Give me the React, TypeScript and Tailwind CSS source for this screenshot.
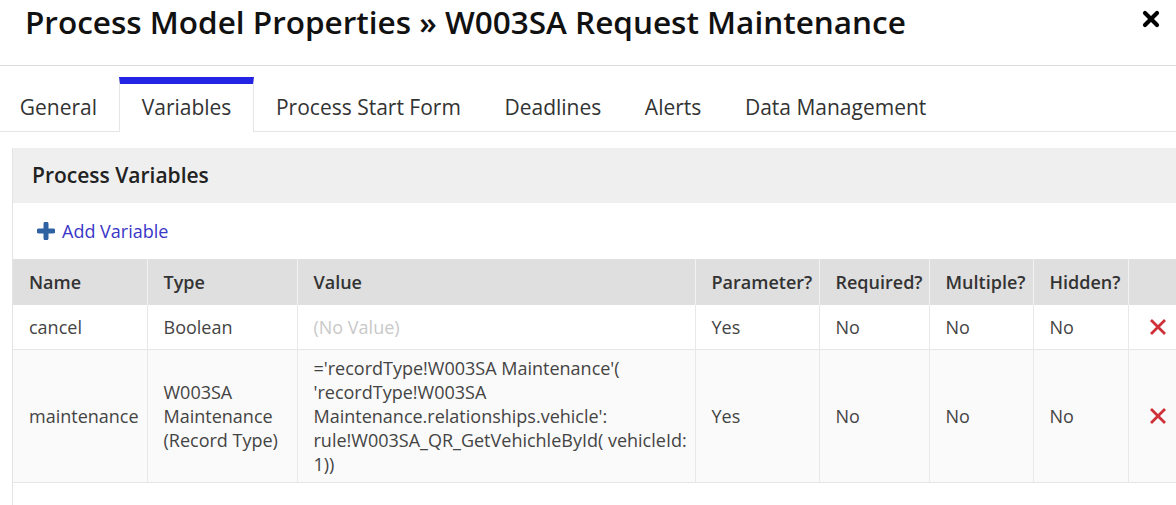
import React from "react";

const TABS = [
  "General",
  "Variables",
  "Process Start Form",
  "Deadlines",
  "Alerts",
  "Data Management",
];

type Variable = {
  name: string;
  type: React.ReactNode;
  value: React.ReactNode;
  parameter: string;
  required: string;
  multiple: string;
  hidden: string;
};

const VARIABLES: Variable[] = [
  {
    name: "cancel",
    type: "Boolean",
    value: <span className="text-[#c9c9c9]">(No Value)</span>,
    parameter: "Yes",
    required: "No",
    multiple: "No",
    hidden: "No",
  },
  {
    name: "maintenance",
    type: "W003SA Maintenance (Record Type)",
    value:
      "='recordType!W003SA Maintenance'( 'recordType!W003SA Maintenance.relationships.vehicle': rule!W003SA_QR_GetVehichleById( vehicleId: 1))",
    parameter: "Yes",
    required: "No",
    multiple: "No",
    hidden: "No",
  },
];

function CloseIcon() {
  return (
    <svg width="18" height="18" viewBox="0 0 18 18">
      <path
        d="M3 3 L15 15 M15 3 L3 15"
        stroke="#000"
        strokeWidth="4.2"
        strokeLinecap="round"
      />
    </svg>
  );
}

function PlusIcon() {
  return (
    <svg width="18" height="18" viewBox="0 0 18 18">
      <path
        d="M9 2 V16 M2 9 H16"
        stroke="#2f62a3"
        strokeWidth="5"
        strokeLinecap="round"
      />
    </svg>
  );
}

function DeleteIcon() {
  return (
    <svg width="20" height="20" viewBox="0 0 20 20">
      <path
        d="M3 3 L17 17 M17 3 L3 17"
        stroke="#cf3038"
        strokeWidth="2.8"
      />
    </svg>
  );
}

const cell = "border-r border-[#e8e8e8] px-4 align-middle";

export default function App() {
  return (
    <div
      className="h-[505px] w-[1176px] overflow-hidden bg-white text-[#333]"
      style={{ fontFamily: '"Open Sans", "Liberation Sans", sans-serif' }}
    >
      {/* dialog title */}
      <div className="flex h-[66px] items-start justify-between border-b border-[#dcdcdc] pl-[25px] pr-[16px]">
        <h1 className="text-[31.5px] font-semibold leading-[43px] text-[#111]">
          Process Model Properties » W003SA Request Maintenance
        </h1>
        <div className="mt-[10px]">
          <CloseIcon />
        </div>
      </div>

      {/* tabs */}
      <div className="mt-[11px] flex h-[55px] border-b border-[#e6e6e6]">
        <div className="-ml-[2px] flex">
          {TABS.map((tab) => {
            const active = tab === "Variables";
            return (
              <div
                key={tab}
                className={`flex items-center px-[21.8px] text-[21px] text-[#333] ${
                  active
                    ? "-mb-px border-x border-[#e6e6e6] border-t-[7px] border-t-[#2424e4] bg-white pb-[1px]"
                    : "border-t-[7px] border-t-transparent"
                }`}
              >
                {tab}
              </div>
            );
          })}
        </div>
      </div>

      {/* variables panel */}
      <div className="ml-[12px] mt-[16px] w-[1180px] border-l border-[#e4e4e4]">
        <div className="flex h-[55px] items-center bg-[#efefef] pl-[19px] pt-[1px] text-[21px] font-semibold text-[#222]">
          Process Variables
        </div>
        <div className="flex h-[56px] items-center gap-[7px] pl-[24px] text-[18px] text-[#3a36c8]">
          <PlusIcon />
          <span>Add Variable</span>
        </div>
        <table className="w-[1176px] table-fixed border-collapse text-[18px] leading-[24px] text-[#444]">
          <colgroup>
            <col className="w-[134px]" />
            <col className="w-[150px]" />
            <col className="w-[398px]" />
            <col className="w-[124px]" />
            <col className="w-[110px]" />
            <col className="w-[104px]" />
            <col className="w-[95px]" />
            <col />
          </colgroup>
          <thead>
            <tr className="h-[46px] bg-[#dfdfdf] text-left text-[#333]">
              <th className={`${cell} border-[#f2f2f2] font-semibold`}>Name</th>
              <th className={`${cell} border-[#f2f2f2] font-semibold`}>Type</th>
              <th className={`${cell} border-[#f2f2f2] font-semibold`}>Value</th>
              <th className={`${cell} border-[#f2f2f2] font-semibold`}>Parameter?</th>
              <th className={`${cell} border-[#f2f2f2] font-semibold`}>Required?</th>
              <th className={`${cell} border-[#f2f2f2] font-semibold`}>Multiple?</th>
              <th className={`${cell} border-[#f2f2f2] font-semibold`}>Hidden?</th>
              <th className="px-4" />
            </tr>
          </thead>
          <tbody>
            {VARIABLES.map((v, i) => (
              <tr
                key={v.name}
                className={`border-b border-[#e6e6e6] ${
                  i === 0 ? "h-[44px] bg-white" : "h-[133px] bg-[#fafafa]"
                }`}
              >
                <td className={cell}>{v.name}</td>
                <td className={cell}>{v.type}</td>
                <td className={`${cell} pr-0`}>{v.value}</td>
                <td className={cell}>{v.parameter}</td>
                <td className={cell}>{v.required}</td>
                <td className={cell}>{v.multiple}</td>
                <td className={cell}>{v.hidden}</td>
                <td className="pl-[19px] align-middle">
                  <div className="flex">
                    <DeleteIcon />
                  </div>
                </td>
              </tr>
            ))}
          </tbody>
        </table>
        <div className="h-[30px]" />
      </div>
    </div>
  );
}
